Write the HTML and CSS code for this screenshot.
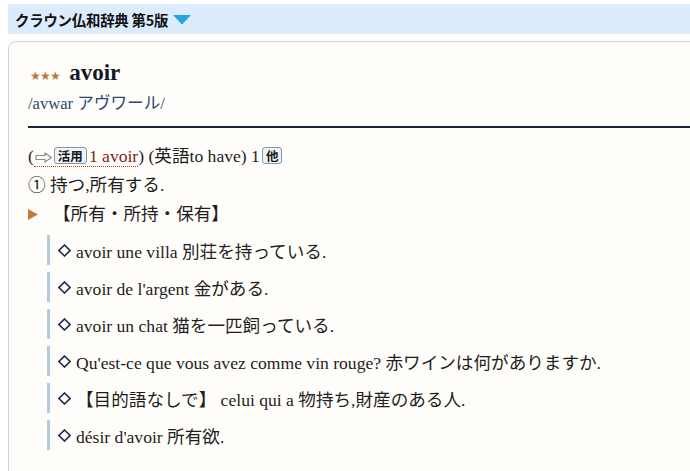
FILE: index.html
```html
<!DOCTYPE html>
<html lang="ja">
<head>
<meta charset="utf-8">
<title>クラウン仏和辞典 第5版 - avoir</title>
<link rel="stylesheet" href="styles.css">
</head>
<body>
<div class="page">
  <div class="dict-bar">
    <span class="dict-name">クラウン仏和辞典 第5版</span>
    <svg class="dict-caret" width="18" height="10" viewBox="0 0 18 10"><polygon points="0,0 18,0 9,9.5" fill="#22a6dc"/></svg>
  </div>
  <div class="card">
    <div class="head">
      <span class="stars">★★★</span>
      <span class="word">avoir</span>
    </div>
    <div class="pron">/avwar アヴワール/</div>
    <hr class="rule">
    <div class="line">(<span class="ref"><svg class="arrow" width="18" height="11" viewBox="0 0 18 11"><polygon points="1,3.5 10,3.5 10,1 16.5,5.5 10,10 10,7.5 1,7.5" fill="none" stroke="#8c8c8c" stroke-width="1.2" stroke-linejoin="round"/></svg><span class="badge">活用</span>1 avoir</span>) (英語to have) 1<span class="badge badge-gap">他</span></div>
    <div class="line">① 持つ,所有する.</div>
    <div class="line sense"><svg class="tri" width="10" height="11" viewBox="0 0 10 11"><polygon points="0,0 10,5.5 0,11" fill="#c27b33"/></svg><span class="sense-label">【所有・所持・保有】</span></div>
    <ul class="examples">
      <li class="ex"><svg class="dia" width="13" height="13" viewBox="0 0 13 13"><polygon points="6.5,1 12,6.5 6.5,12 1,6.5" fill="none" stroke="#1d2c50" stroke-width="1.6"/></svg>avoir une villa 別荘を持っている.</li>
      <li class="ex"><svg class="dia" width="13" height="13" viewBox="0 0 13 13"><polygon points="6.5,1 12,6.5 6.5,12 1,6.5" fill="none" stroke="#1d2c50" stroke-width="1.6"/></svg>avoir de l'argent 金がある.</li>
      <li class="ex"><svg class="dia" width="13" height="13" viewBox="0 0 13 13"><polygon points="6.5,1 12,6.5 6.5,12 1,6.5" fill="none" stroke="#1d2c50" stroke-width="1.6"/></svg>avoir un chat 猫を一匹飼っている.</li>
      <li class="ex"><svg class="dia" width="13" height="13" viewBox="0 0 13 13"><polygon points="6.5,1 12,6.5 6.5,12 1,6.5" fill="none" stroke="#1d2c50" stroke-width="1.6"/></svg>Qu'est-ce que vous avez comme vin rouge? 赤ワインは何がありますか.</li>
      <li class="ex"><svg class="dia" width="13" height="13" viewBox="0 0 13 13"><polygon points="6.5,1 12,6.5 6.5,12 1,6.5" fill="none" stroke="#1d2c50" stroke-width="1.6"/></svg>【目的語なしで】 celui qui a 物持ち,財産のある人.</li>
      <li class="ex"><svg class="dia" width="13" height="13" viewBox="0 0 13 13"><polygon points="6.5,1 12,6.5 6.5,12 1,6.5" fill="none" stroke="#1d2c50" stroke-width="1.6"/></svg>désir d'avoir 所有欲.</li>
    </ul>
  </div>
</div>
</body>
</html>
```
FILE: styles.css
```css
html, body {
  margin: 0;
  padding: 0;
  overflow: hidden;
  background: #ffffff;
}
.page {
  padding: 4px 0 0 8px;
  font-family: "Liberation Serif", "Noto Sans CJK JP", serif;
  font-size: 17.6px;
  color: #1e1e1e;
}
.dict-bar {
  height: 30px;
  background: #dbecfd;
  display: flex;
  align-items: center;
  padding-left: 7px;
}
.dict-name {
  font-family: "Noto Sans CJK JP", sans-serif;
  font-weight: 700;
  font-size: 14.4px;
  color: #111;
  letter-spacing: -0.2px;
}
.dict-caret {
  margin-left: 5px;
  margin-top: 1px;
}
.card {
  margin-top: 7px;
  width: 720px;
  min-height: 460px;
  background: #fffdf9;
  border: 1px solid #d0d4d9;
  border-radius: 8px 0 0 0;
  padding: 17px 0 0 19px;
}
.head {
  display: flex;
  align-items: baseline;
  line-height: 28px;
}
.stars {
  font-family: "DejaVu Sans", sans-serif;
  font-size: 12px;
  color: #b5773c;
  letter-spacing: -0.7px;
  margin-left: 2px;
}
.word {
  font-weight: 700;
  font-size: 23px;
  margin-left: 9px;
  color: #121826;
}
.pron {
  margin-top: 2px;
  font-size: 16.6px;
  line-height: 24px;
  color: #2d4674;
}
.rule {
  margin: 10px 0 0 0;
  border: 0;
  height: 2px;
  background: #1b2140;
}
.line {
  line-height: 29px;
  height: 29px;
  white-space: nowrap;
}
.rule + .line {
  margin-top: 14px;
}
.ref {
  color: #7e1c1c;
  border-bottom: 1px dotted #c0392b;
}
.arrow {
  vertical-align: -1px;
  margin: 0 1px 0 1px;
}
.badge {
  display: inline-block;
  font-family: "Noto Sans CJK JP", sans-serif;
  font-weight: 700;
  font-size: 12.5px;
  line-height: 15px;
  padding: 0 3px;
  border: 1px solid #8596ab;
  border-radius: 3px;
  background: #eef3f8;
  color: #1a1a1a;
  vertical-align: 1px;
  margin-right: 2px;
}
.badge-gap {
  margin-left: 2px;
}
.sense {
  display: flex;
  align-items: center;
}
.sense-label {
  margin-left: 15px;
}
.examples {
  list-style: none;
  margin: 6px 0 0 19px;
  padding: 0;
}
.ex {
  display: flex;
  align-items: center;
  height: 30px;
  border-left: 3px solid #b3cbe0;
  padding-left: 8px;
  margin-bottom: 7px;
  white-space: nowrap;
}
.dia {
  margin-right: 5px;
  flex: none;
}
```
